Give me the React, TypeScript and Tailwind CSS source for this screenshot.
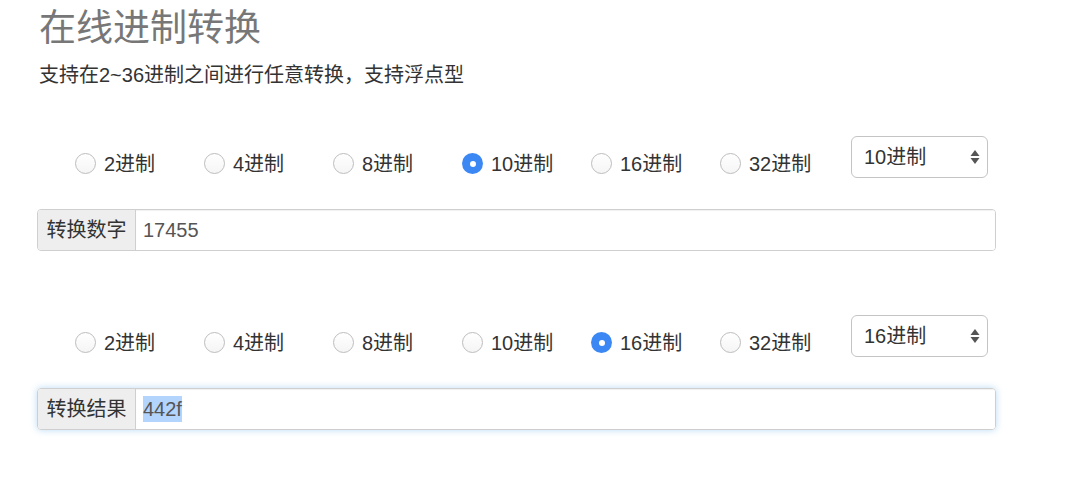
import React from "react";

const font = { fontFamily: '"Helvetica Neue", "Liberation Sans", Arial, "Noto Sans CJK SC", sans-serif' };

const bases = ["2进制", "4进制", "8进制", "10进制", "16进制", "32进制"];

function Radio({ checked }: { checked: boolean }) {
  if (checked) {
    return (
      <span className="flex h-[21px] w-[21px] items-center justify-center rounded-full bg-[#3b88f5]">
        <span className="h-[6px] w-[6px] rounded-full bg-white" />
      </span>
    );
  }
  return <span className="h-[21px] w-[21px] rounded-full border border-[#bdbdbd] bg-gradient-to-b from-white to-[#f5f5f5]" />;
}

function Row({ selected }: { selected: string }) {
  return (
    <div className="flex h-[42px] items-center pl-[38px]">
      {bases.map((b) => (
        <div key={b} className="flex w-[129px] items-center gap-[8px] pt-[13px]">
          <Radio checked={b === selected} />
          <span className="text-[20px] leading-none text-[#333]">{b}</span>
        </div>
      ))}
      <div className="ml-[2px] flex h-[42px] w-[137px] items-center justify-between rounded-[6px] border border-[#c4c4c4] bg-white pl-[12px] pr-[7px]">
        <span className="text-[20px] leading-none text-[#333]">{selected}</span>
        <svg width="10" height="18" viewBox="0 0 10 18">
          <path d="M5 2 L9.5 8 L0.5 8 Z" fill="#555" />
          <path d="M5 16 L9.5 10 L0.5 10 Z" fill="#555" />
        </svg>
      </div>
    </div>
  );
}

function InputGroup({ label, value, focused }: { label: string; value: string; focused?: boolean }) {
  return (
    <div
      className={
        "flex h-[42px] w-[959px] overflow-hidden rounded-[4px] border border-[#cfcfcf] " +
        (focused ? "shadow-[0_0_7px_rgba(102,175,233,0.45)]" : "")
      }
    >
      <div className="flex w-[98px] items-center justify-center border-r border-[#cfcfcf] bg-[#eeeeee] text-[20px] text-[#333]">
        {label}
      </div>
      <div className="flex flex-1 items-center bg-white pl-[7px] text-[20px] text-[#555] shadow-[inset_0_1px_1px_rgba(0,0,0,0.06)]">
        {focused ? <span className="bg-[#b3d4fc] leading-[26px]">{value}</span> : <span>{value}</span>}
      </div>
    </div>
  );
}

export default function App() {
  return (
    <div className="h-[491px] w-[1080px] bg-white px-[37px]" style={font}>
      <h1 className="h-[58px] pl-[2px] text-[37px] font-normal leading-[58px] text-[#777]">在线进制转换</h1>
      <p className="mt-[2px] pl-[2px] text-[20px] leading-[30px] text-[#333]">支持在2~36进制之间进行任意转换，支持浮点型</p>
      <div className="mt-[46px]">
        <Row selected="10进制" />
      </div>
      <div className="mt-[31px]">
        <InputGroup label="转换数字" value="17455" />
      </div>
      <div className="mt-[64px]">
        <Row selected="16进制" />
      </div>
      <div className="mt-[31px]">
        <InputGroup label="转换结果" value="442f" focused />
      </div>
    </div>
  );
}
